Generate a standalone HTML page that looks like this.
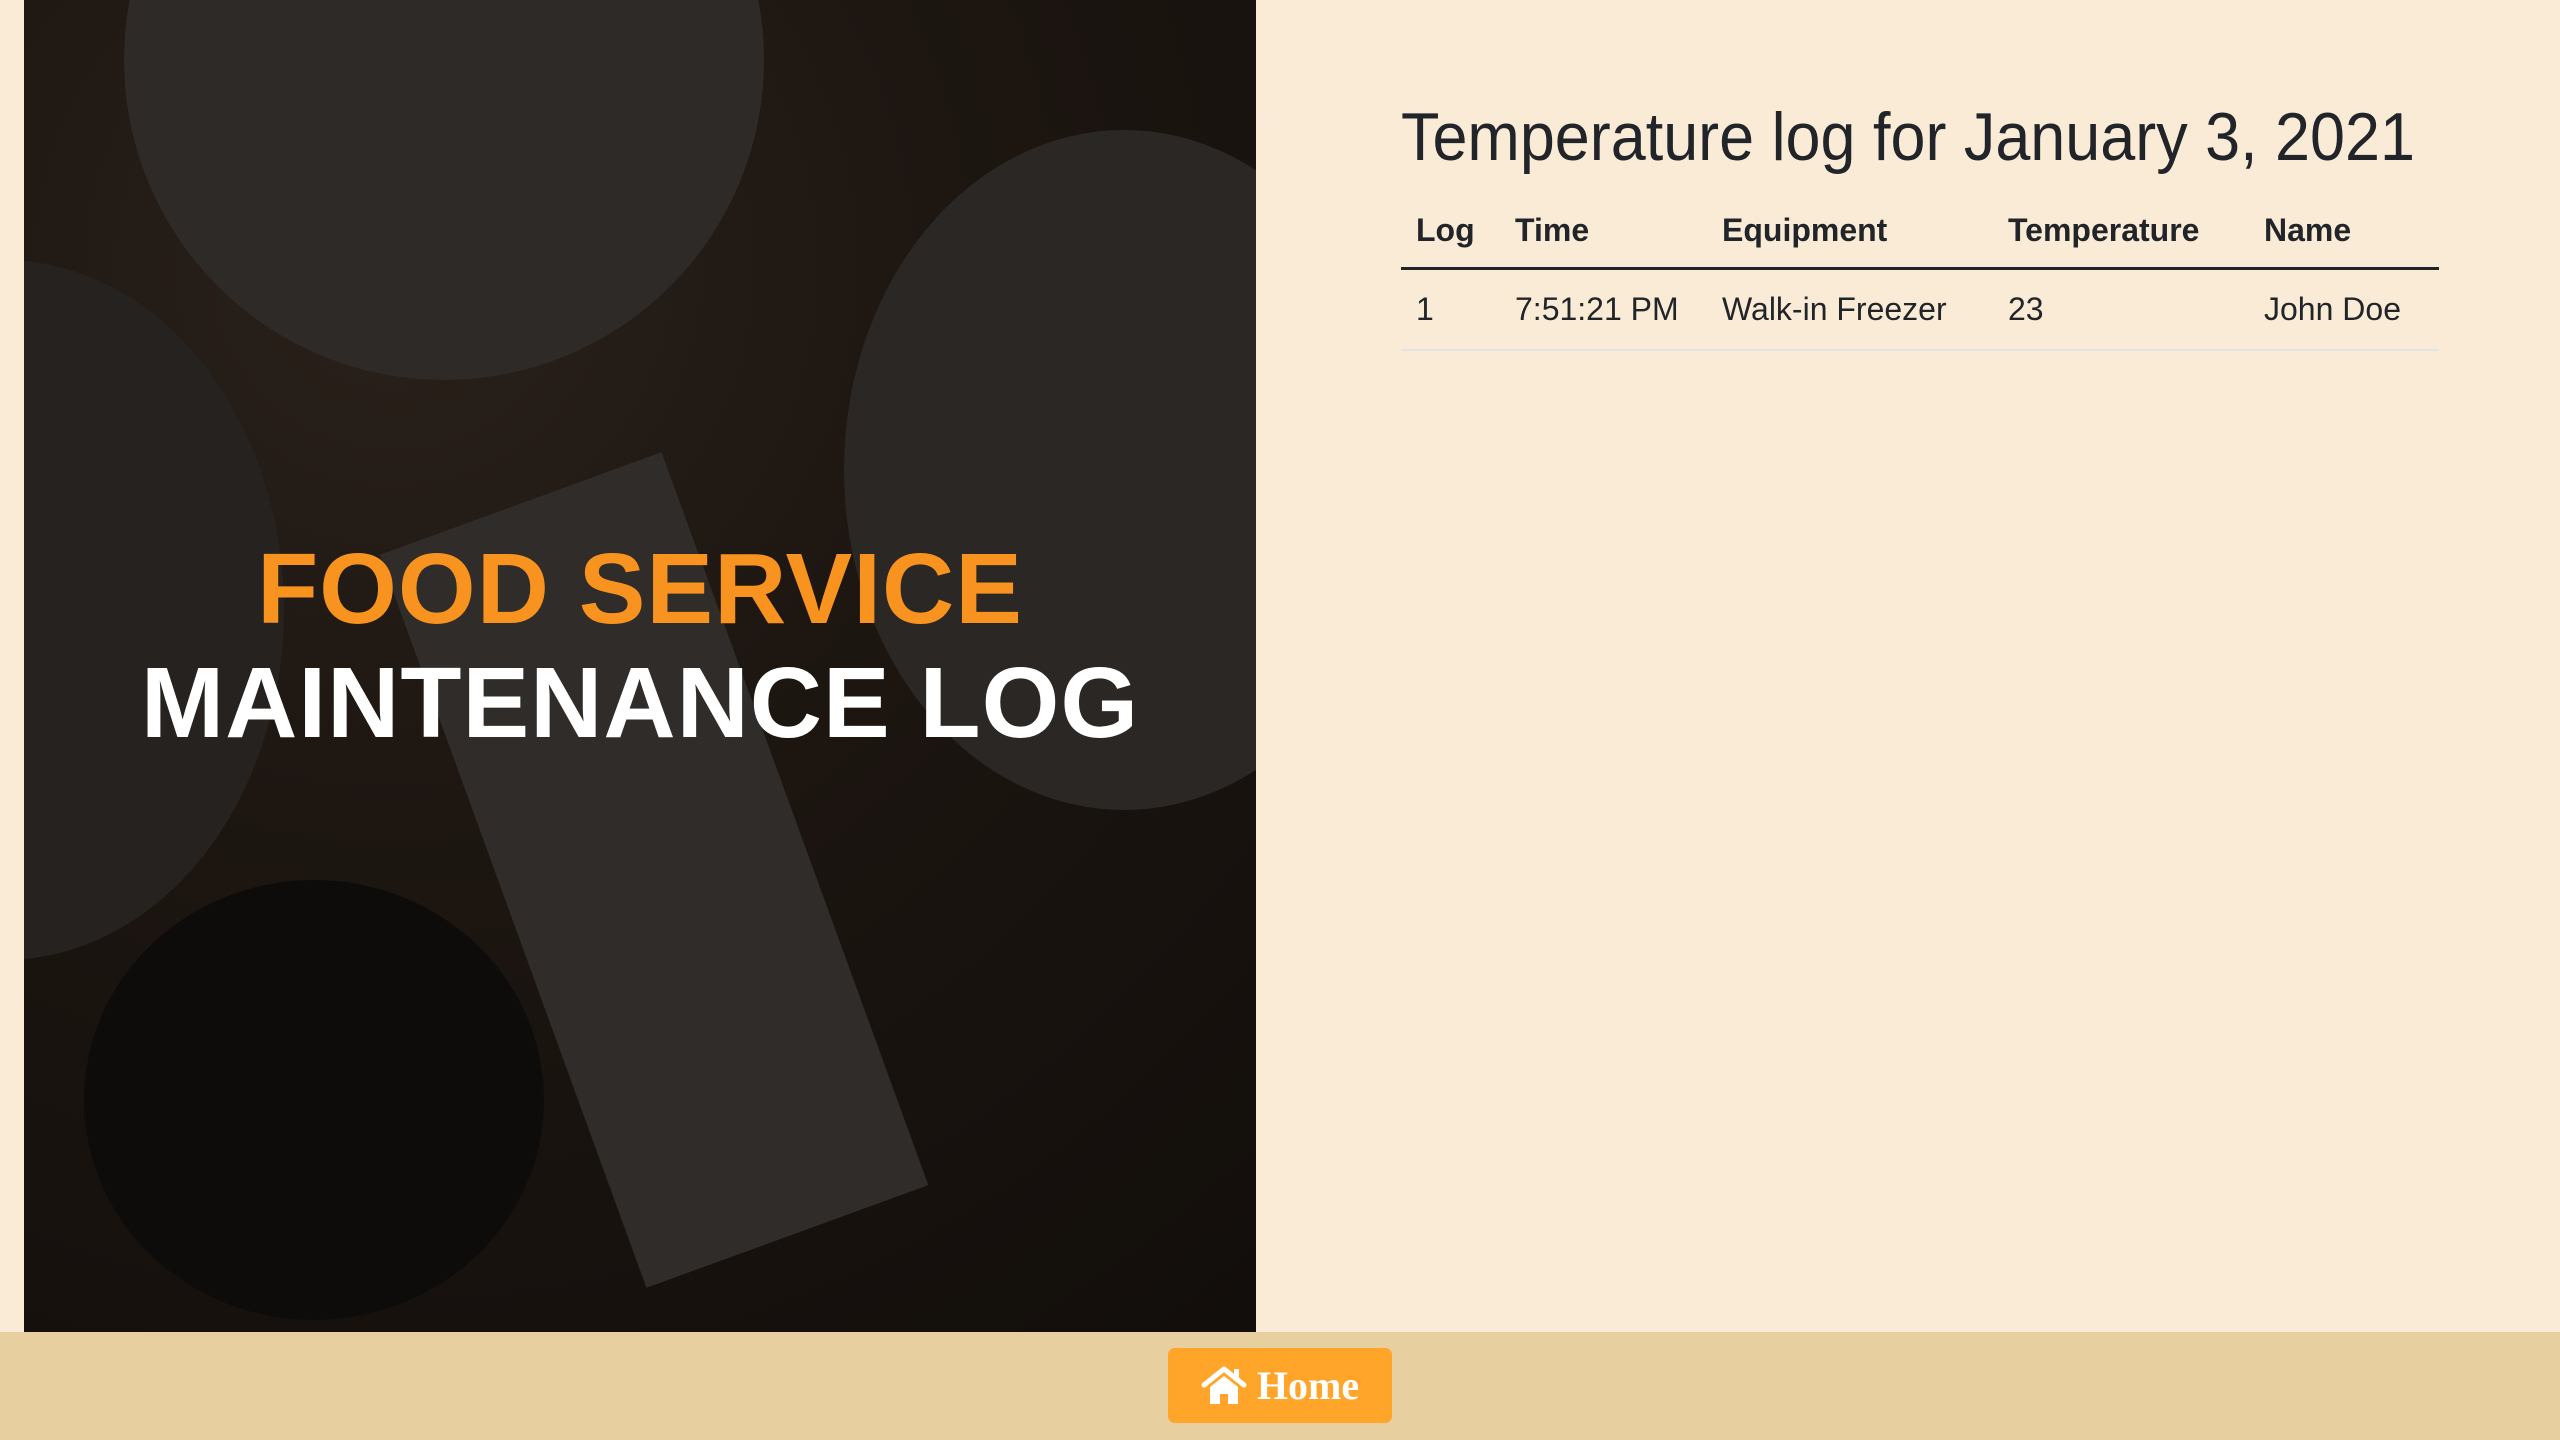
<!DOCTYPE html>
<html><head><meta charset="utf-8"><style>
*{margin:0;padding:0;box-sizing:border-box}
body{width:2560px;height:1440px;background:#faebd7;position:relative;overflow:hidden;font-family:"Liberation Sans",sans-serif;color:#212529}
.img{position:absolute;left:24px;top:0;width:1232px;height:1332px;background:radial-gradient(circle at 30% 20%,#2a211b 0,#1d1611 40%,#120e0b 100%);overflow:hidden}
.img .c{position:absolute;border-radius:50%}
.hero{position:absolute;left:24px;width:1232px;text-align:center;font-weight:bold;white-space:nowrap}
.h1{top:532px;color:#f7931e;font-size:100px;letter-spacing:1px}
.h2{top:646px;color:#fff;font-size:100px;letter-spacing:1px}
.footer{position:absolute;left:0;top:1332px;width:2560px;height:108px;background:#e8cfa0}
.btn{position:absolute;left:1168px;top:1348px;width:224px;height:75px;background:#ffa52a;border-radius:7px;color:#fff;font-family:"Liberation Serif",serif;font-weight:bold;font-size:40px;display:flex;align-items:center;justify-content:center;gap:10px}
.title{position:absolute;left:1401px;top:98px;font-size:68px;white-space:nowrap;transform:scaleX(0.925);transform-origin:left;color:#212529}
table{position:absolute;left:1401px;top:195px;width:1038px;border-collapse:collapse;font-size:32px}
th{text-align:left;font-weight:bold;height:73px;border-bottom:3px solid #212529;padding-left:15px}
td{height:82px;border-bottom:2px solid #e3e3e3;padding-left:15px}
</style></head><body>
<div class="img">
<div class="c" style="left:100px;top:-260px;width:640px;height:640px;background:#2d2a27"></div>
<div class="c" style="left:820px;top:130px;width:560px;height:680px;background:#2a2724"></div>
<div class="c" style="left:-300px;top:260px;width:560px;height:700px;background:#25221f"></div>
<div class="c" style="left:60px;top:880px;width:460px;height:440px;background:#0e0c0a"></div>
<div style="position:absolute;left:480px;top:480px;width:300px;height:780px;background:#2f2c29;transform:rotate(-20deg)"></div>
</div>
<div class="hero h1">FOOD SERVICE</div>
<div class="hero h2">MAINTENANCE LOG</div>
<div class="title">Temperature log for January 3, 2021</div>
<table>
<tr><th style="width:99px">Log</th><th style="width:207px">Time</th><th style="width:286px">Equipment</th><th style="width:256px">Temperature</th><th>Name</th></tr>
<tr><td>1</td><td>7:51:21 PM</td><td>Walk-in Freezer</td><td>23</td><td>John Doe</td></tr>
</table>
<div class="footer"></div>
<div class="btn"><svg width="46" height="40" viewBox="0 0 46 40"><path d="M3 19 L23 3 L43 19" fill="none" stroke="#fff" stroke-width="5" stroke-linecap="round" stroke-linejoin="round"/><rect x="33" y="3" width="5" height="10" fill="#fff"/><path d="M9 21 L23 10 L37 21 V38 H27 V28 H19 V38 H9 Z" fill="#fff"/></svg>Home</div>
</body></html>
